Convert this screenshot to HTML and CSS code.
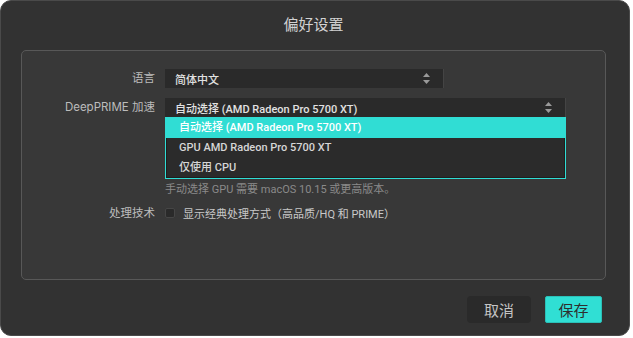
FILE: index.html
```html
<!DOCTYPE html>
<html lang="zh-CN">
  <head>
    <meta charset="UTF-8" />
    <meta name="viewport" content="width=device-width, initial-scale=1" />
    <title>偏好设置</title>
    <link rel="stylesheet" href="styles.css">
  </head>
  <body>
    <div class="window">
      <h1 class="title">偏好设置</h1>

      <!-- Settings panel -->
      <div class="panel">
        <div class="row">
          <span class="label">语言</span>
          <div class="select short">
            <span>简体中文</span>
            <svg class="arrows" width="7" height="11" viewBox="0 0 7 11">
              <path d="M3.5 0 L7 4 L0 4 Z M0 7 L7 7 L3.5 11 Z" fill="#9a9a9a" />
            </svg>
          </div>
        </div>

        <div class="row top">
          <span class="label">DeepPRIME 加速</span>
          <div class="field">
            <div class="select wide">
              <span>自动选择 (AMD Radeon Pro 5700 XT)</span>
              <svg class="arrows" width="7" height="11" viewBox="0 0 7 11">
                <path d="M3.5 0 L7 4 L0 4 Z M0 7 L7 7 L3.5 11 Z" fill="#9a9a9a" />
              </svg>
            </div>
            <ul class="menu">
              <li class="active">自动选择 (AMD Radeon Pro 5700 XT)</li>
              <li>GPU AMD Radeon Pro 5700 XT</li>
              <li>仅使用 CPU</li>
            </ul>
          </div>
        </div>

        <div class="row hint-row">
          <span class="label"></span>
          <p class="hint">手动选择 GPU 需要 macOS 10.15 或更高版本。</p>
        </div>

        <div class="row check-row">
          <span class="label">处理技术</span>
          <label class="check">
            <span class="box"></span>
            显示经典处理方式（高品质/HQ 和 PRIME）
          </label>
        </div>
      </div>

      <!-- Dialog buttons -->
      <div class="actions">
        <button class="btn">取消</button>
        <button class="btn primary">保存</button>
      </div>
    </div>
  </body>
</html>
```

FILE: styles.css
```css
* {
  box-sizing: border-box;
}

body {
  margin: 0;
  background-color: #ffffff;
  font-family: Roboto, "Noto Sans CJK SC", sans-serif;
  font-size: 11px;
  color: #bdbdbd;
}

.window {
  width: 630px;
  height: 336px;
  background-color: #323232;
  border: 1px solid #4a4a4a;
  border-radius: 11px;
  padding: 0 23px 0 20px;
}

.title {
  margin: 0;
  height: 49px;
  line-height: 49px;
  text-align: center;
  font-size: 15px;
  font-weight: 400;
  color: #d2d2d2;
}

.panel {
  height: 230px;
  background-color: #383838;
  border: 1px solid #585858;
  border-radius: 5px;
  padding-top: 18px;
}

.row {
  display: flex;
  align-items: center;
  gap: 10px;
  margin-top: 10px;
}

.row:first-child {
  margin-top: 0;
}

.row.top {
  align-items: flex-start;
}

.label {
  width: 133px;
  flex: none;
  text-align: right;
  line-height: 19px;
  font-family: Inter, "Noto Sans CJK SC", sans-serif;
  font-size: 11.5px;
  color: #bcbcbc;
}

.select {
  height: 19px;
  display: flex;
  align-items: center;
  justify-content: space-between;
  padding: 0 13px 0 10px;
  background-color: #2a2a2a;
  border-right: 1px solid #444;
  color: #e2e2e2;
  font-weight: 500;
}

.select.short {
  width: 279px;
}

.select.wide {
  width: 401px;
}

.arrows {
  display: block;
}

.menu {
  list-style: none;
  margin: 0;
  padding: 0;
  width: 401px;
  border: 1px solid #30ddd4;
  background-color: #2b2b2b;
  box-shadow: inset 0 0 0 1px #1e1e1e;
}

.menu li {
  height: 20px;
  line-height: 20px;
  padding-left: 13px;
  color: #d6d6d6;
  font-weight: 500;
}

.menu li.active {
  background-color: #30ddd4;
  color: #ffffff;
}

.hint-row {
  margin-top: 3px;
}

.hint {
  margin: 0;
  line-height: 16px;
  color: #8a8a8a;
}

.check-row {
  margin-top: 6px;
  height: 18px;
}

.check {
  display: flex;
  align-items: center;
  gap: 8px;
  color: #c8c8c8;
}

.box {
  width: 10px;
  height: 10px;
  background-color: #2a2a2a;
  border: 1px solid #464646;
  border-radius: 2px;
}

.actions {
  display: flex;
  justify-content: flex-end;
  gap: 14px;
  margin-top: 16px;
  padding-right: 4px;
}

.btn {
  font-family: inherit;
  font-size: 15px;
  height: 27px;
  border: none;
  border-radius: 4px;
  background-color: #2a2a2a;
  color: #c4c4c4;
  width: 64px;
  padding: 0;
}

.btn.primary {
  width: 57px;
  border-radius: 2px;
  background-color: #30dfd4;
  border: 1px solid #2bc0b8;
  color: #2e2e2e;
}
```
